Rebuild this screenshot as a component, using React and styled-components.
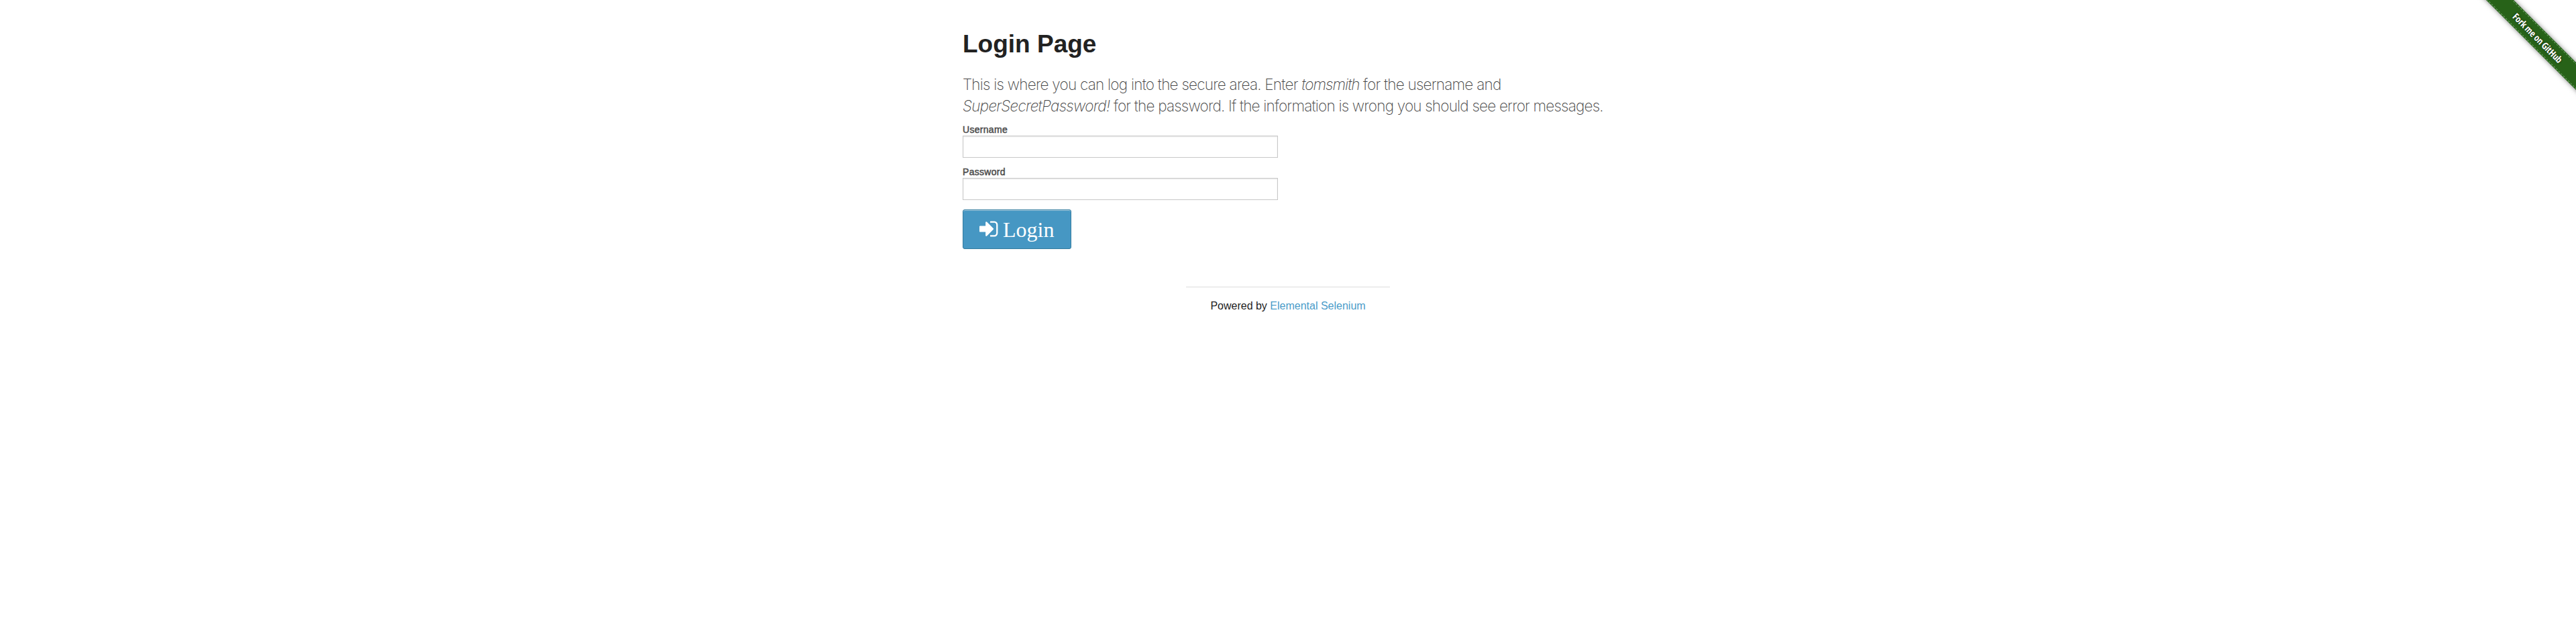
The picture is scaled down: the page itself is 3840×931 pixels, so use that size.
import React from 'react';
import styled, { createGlobalStyle } from 'styled-components';

const GlobalStyle = createGlobalStyle`
  *, *::before, *::after { box-sizing: border-box; }
  html, body { margin: 0; padding: 0; background: #fff; }
  body {
    font-family: "Liberation Sans", Arial, sans-serif;
    color: #222;
    overflow: hidden;
    -webkit-font-smoothing: antialiased;
  }
`;

const Page = styled.div`
  position: relative;
  height: 931px;
  overflow: hidden;
`;

const Content = styled.main`
  width: 970px;
  margin: 0 auto;
  padding-top: 40px;
`;

const Title = styled.h2`
  margin: 0;
  height: 52px;
  font-size: 37px;
  font-weight: 700;
  line-height: 52px;
`;

const Lead = styled.h4`
  margin: 18px 0 0;
  font-family: Inter, "Liberation Sans", sans-serif;
  font-size: 22.5px;
  font-weight: 200;
  line-height: 32px;
  color: #444;
  white-space: nowrap;
`;

const Phrase = styled.span`
  letter-spacing: ${(p) => p.$track};
  font-style: ${(p) => (p.$italic ? 'italic' : 'normal')};
`;

const Form = styled.form`
  display: flex;
  flex-direction: column;
  align-items: flex-start;
  margin-top: 9px;
`;

const Field = styled.label`
  display: flex;
  flex-direction: column;
  width: 470px;
  height: 63px;
  padding-top: 2px;
  font-size: 14px;
  line-height: 17px;
  letter-spacing: 0.3px;
  color: #4d4d4d;
  -webkit-text-stroke: 0.5px #4d4d4d;
`;

const Input = styled.input`
  width: 100%;
  height: 33px;
  padding: 8px;
  border: 1px solid #c8c8c8;
  border-radius: 0;
  background: #fff;
  box-shadow: inset 0 1px 2px rgba(0, 0, 0, 0.1);
  outline: none;
`;

const Button = styled.button`
  display: flex;
  align-items: flex-start;
  width: 162px;
  height: 59px;
  margin-top: 3px;
  padding: 12px 0 0 24px;
  border: 1px solid #357c9f;
  border-radius: 3px;
  background: #4697c3;
  box-shadow: inset 0 1px 0 rgba(255, 255, 255, 0.5);
  color: #fff;
  font-family: "Liberation Serif", "Times New Roman", serif;
  font-size: 32px;
  line-height: 34px;
`;

const SignIn = styled.svg`
  width: 32px;
  height: 32px;
  margin-right: 3px;
  fill: currentColor;
`;

const Footer = styled.footer`
  width: 304px;
  margin: 56px auto 0;
  border-top: 1px solid #ddd;
  padding-top: 18px;
  font-size: 16px;
  line-height: 20px;
  text-align: center;
  white-space: nowrap;
`;

const FooterLink = styled.a`
  color: #4a9cc9;
  text-decoration: none;
`;

const RibbonFrame = styled.a`
  position: absolute;
  top: 0;
  right: 0;
  width: 149px;
  height: 149px;
  overflow: hidden;
  color: #fff;
`;

const Ribbon = styled.span`
  position: absolute;
  top: 42px;
  left: -18px;
  width: 220px;
  height: 29px;
  padding: 1px 0;
  background: #276218;
  box-shadow: 0 0 7px rgba(0, 0, 0, 0.5);
  transform: rotate(45deg);
`;

const RibbonLabel = styled.span`
  display: block;
  height: 27px;
  border-top: 1px dashed #6fa568;
  border-bottom: 1px dashed #6fa568;
  font-family: "Open Sans", sans-serif;
  font-size: 14px;
  font-weight: 700;
  font-stretch: 85%;
  line-height: 25px;
  letter-spacing: -0.15px;
  text-align: center;
  text-shadow: 0 0 3px rgba(0, 0, 0, 0.7);
  white-space: nowrap;
`;

export default function App() {
  return (
    <Page>
      <GlobalStyle />
      <Content>
        <Title>Login Page</Title>
        <Lead>
          <Phrase $track="-0.75px">This is where you can log into the secure area. Enter </Phrase>
          <Phrase $italic $track="-0.95px">tomsmith</Phrase>
          <Phrase $track="-0.76px"> for the username and</Phrase>
          <br />
          <Phrase $italic $track="-0.7px">SuperSecretPassword!</Phrase>
          <Phrase $track="-0.78px"> for the password. If the information is wrong you should see error messages.</Phrase>
        </Lead>
        <Form>
          <Field>
            Username
            <Input type="text" />
          </Field>
          <Field>
            Password
            <Input type="password" />
          </Field>
          <Button type="button">
            <SignIn viewBox="0 0 1792 1792">
              <path d="M1184 896q0 26-19 45l-544 544q-19 19-45 19t-45-19-19-45v-288h-448q-26 0-45-19t-19-45v-384q0-26 19-45t45-19h448v-288q0-26 19-45t45-19 45 19l544 544q19 19 19 45zm352-352v704q0 119-84.5 203.5t-203.5 84.5h-320q-13 0-22.5-9.5t-9.5-22.5q0-4-1-20t-.5-26.5 3-23.5 10-19.5 20.5-6.5h320q66 0 113-47t47-113v-704q0-66-47-113t-113-47h-312l-11.5-1-11.5-3-8-5.5-7-9-2-13.5q0-4-1-20t-.5-26.5 3-23.5 10-19.5 20.5-6.5h320q119 0 203.5 84.5t84.5 203.5z" />
            </SignIn>
            Login
          </Button>
        </Form>
        <Footer>
          Powered by <FooterLink>Elemental Selenium</FooterLink>
        </Footer>
      </Content>
      <RibbonFrame>
        <Ribbon>
          <RibbonLabel>Fork me on GitHub</RibbonLabel>
        </Ribbon>
      </RibbonFrame>
    </Page>
  );
}
